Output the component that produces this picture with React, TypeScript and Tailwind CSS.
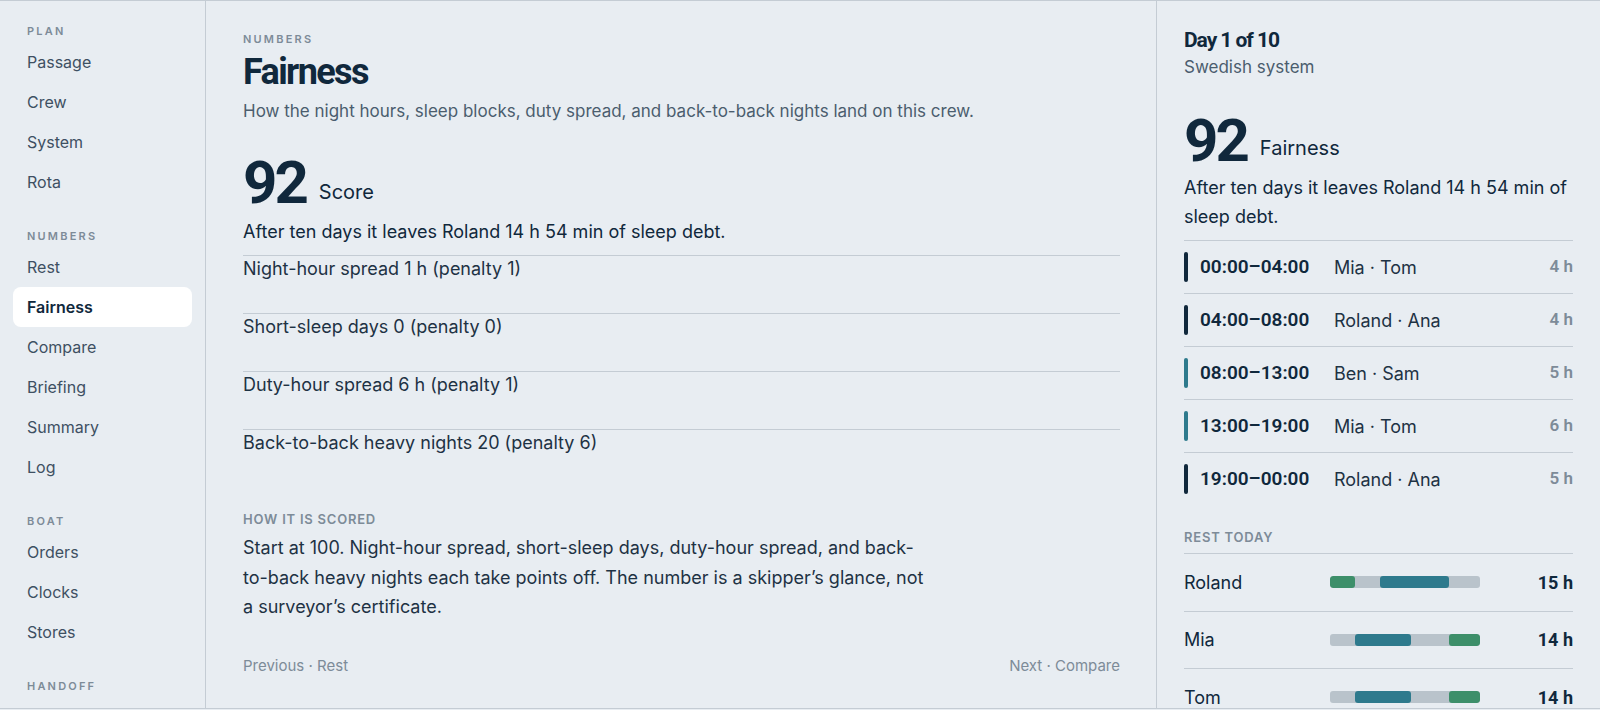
import React from 'react';

const display = "font-['Roboto',sans-serif]";
const numeric = "font-['Roboto',sans-serif]";

const nav = [
  { label: 'PLAN', items: ['Passage', 'Crew', 'System', 'Rota'] },
  { label: 'NUMBERS', items: ['Rest', 'Fairness', 'Compare', 'Briefing', 'Summary', 'Log'] },
  { label: 'BOAT', items: ['Orders', 'Clocks', 'Stores'] },
  { label: 'HANDOFF', items: [] as string[] },
];

const penalties = [
  'Night-hour spread 1 h (penalty 1)',
  'Short-sleep days 0 (penalty 0)',
  'Duty-hour spread 6 h (penalty 1)',
  'Back-to-back heavy nights 20 (penalty 6)',
];

const shifts = [
  { time: '00:00–04:00', crew: 'Mia · Tom', hours: '4 h', night: true },
  { time: '04:00–08:00', crew: 'Roland · Ana', hours: '4 h', night: true },
  { time: '08:00–13:00', crew: 'Ben · Sam', hours: '5 h', night: false },
  { time: '13:00–19:00', crew: 'Mia · Tom', hours: '6 h', night: false },
  { time: '19:00–00:00', crew: 'Roland · Ana', hours: '5 h', night: true },
];

// segments in hours of the day: [start, end, kind]
type Seg = [number, number, 'sleep' | 'watch'];
const rest: { name: string; total: string; segs: Seg[] }[] = [
  { name: 'Roland', total: '15 h', segs: [[0, 4, 'sleep'], [8, 19, 'watch']] },
  { name: 'Mia', total: '14 h', segs: [[4, 13, 'watch'], [19, 24, 'sleep']] },
  { name: 'Tom', total: '14 h', segs: [[4, 13, 'watch'], [19, 24, 'sleep']] },
];

function Sidebar() {
  return (
    <aside className="w-[206px] shrink-0 border-r border-[#c4ccd4] px-[13px] pt-[22px] overflow-hidden">
      {nav.map((section, i) => (
        <div key={section.label} className={i === 0 ? '' : 'mt-[26px]'}>
          <div className="pl-[14px] h-4 leading-4 text-[11px] font-semibold tracking-[0.2em] text-[#7d8b98] mb-[3px]">
            {section.label}
          </div>
          {section.items.map((item) => (
            <div
              key={item}
              className={`h-10 flex items-center pl-[14px] rounded-lg text-[16px] ${
                item === 'Fairness'
                  ? 'bg-white font-semibold text-[#10283c]'
                  : 'text-[#3e5062]'
              }`}
            >
              {item}
            </div>
          ))}
        </div>
      ))}
    </aside>
  );
}

function RestBar({ segs }: { segs: Seg[] }) {
  return (
    <div className="relative w-[150px] h-3 rounded-[3px] bg-[#b9c3cb] overflow-hidden">
      {segs.map(([a, b, kind]) => (
        <span
          key={a}
          className={`absolute top-0 h-full rounded-[3px] ${kind === 'sleep' ? 'bg-[#3d8f6a]' : 'bg-[#2e7a8d]'}`}
          style={{ left: `${(a / 24) * 100}%`, width: `${((b - a) / 24) * 100}%` }}
        />
      ))}
    </div>
  );
}

export default function App() {
  return (
    <div className="h-[710px] bg-[#e8edf2] font-['Inter',sans-serif] text-[#1e3244]">
      <div className="h-[709px] flex border-y border-[#c4ccd4] overflow-hidden">
        <Sidebar />

        {/* Main column */}
        <main className="flex-1 min-w-0 pl-[37px] pr-9 pt-[30px] overflow-hidden">
          <div className="h-4 leading-4 text-[11px] font-semibold tracking-[0.2em] text-[#7d8b98]">NUMBERS</div>
          <h1 className={`${display} mt-[5px] text-[36px] leading-[40px] font-bold tracking-[-0.045em] text-[#10283c]`}>
            Fairness
          </h1>
          <p className="mt-[6px] text-[17px] leading-[26px] text-[#4b5d6e]">
            How the night hours, sleep blocks, duty spread, and back-to-back nights land on this crew.
          </p>

          <div className="mt-[29px] flex items-end gap-[13px]">
            <span className={`${display} text-[60px] leading-none font-bold tracking-[-0.05em] text-[#10283c]`}>92</span>
            <span className="mb-[7px] text-[20px] leading-7 text-[#10283c]">Score</span>
          </div>
          <p className="mt-[6px] text-[18px] leading-[26px] text-[#10283c]">
            After ten days it leaves Roland 14 h 54 min of sleep debt.
          </p>

          <div className="mt-[10px]">
            {penalties.map((p) => (
              <div key={p} className="border-t border-[#c4ccd4] pb-[31px]">
                <div className="text-[18px] leading-[26px] text-[#1e3244]">{p}</div>
              </div>
            ))}
          </div>

          <div className="mt-[23px] text-[13px] leading-[18px] font-semibold tracking-[0.06em] text-[#7d8b98]">
            HOW IT IS SCORED
          </div>
          <p className="mt-[5px] max-w-[684px] text-[18px] leading-[1.65] text-[#1e3244]">
            Start at 100. Night-hour spread, short-sleep days, duty-hour spread, and back-to-back heavy nights each take
            points off. The number is a skipper’s glance, not a surveyor’s certificate.
          </p>

          <div className="mt-[33px] flex justify-between text-[15px] leading-[22px] text-[#7d8b98]">
            <span>Previous · Rest</span>
            <span>Next · Compare</span>
          </div>
        </main>

        {/* Right panel */}
        <section className="w-[444px] shrink-0 border-l border-[#c4ccd4] px-[27px] pt-[25px] overflow-hidden">
          <div className={`${display} text-[21px] leading-7 font-bold tracking-[-0.05em] text-[#10283c]`}>Day 1 of 10</div>
          <div className="mt-[1px] text-[17px] leading-6 text-[#4b5d6e]">Swedish system</div>

          <div className="mt-[32px] flex items-end gap-[13px]">
            <span className={`${display} text-[60px] leading-none font-bold tracking-[-0.05em] text-[#10283c]`}>92</span>
            <span className="mb-[9px] text-[20px] leading-7 text-[#10283c]">Fairness</span>
          </div>
          <p className="mt-[3px] text-[18px] leading-[28.5px] text-[#10283c]">
            After ten days it leaves Roland 14 h 54 min of sleep debt.
          </p>

          <div className="mt-[9px]">
            {shifts.map((s) => (
              <div key={s.time} className="h-[53px] border-t border-[#c4ccd4] flex items-center">
                <span className={`w-1 h-[30px] rounded-full ${s.night ? 'bg-[#10283c]' : 'bg-[#2e7a8d]'}`} />
                <span className={`${numeric} ml-[12px] w-[134px] text-[19px] font-semibold text-[#10283c]`}>{s.time}</span>
                <span className="flex-1 text-[18px] text-[#1e3244]">{s.crew}</span>
                <span className={`${numeric} text-[17px] font-semibold text-[#7d8b98]`}>{s.hours}</span>
              </div>
            ))}
          </div>

          <div className="mt-[23px] text-[13px] leading-[18px] font-semibold tracking-[0.06em] text-[#7d8b98]">
            REST TODAY
          </div>
          <div className="mt-[7px]">
            {rest.map((r) => (
              <div key={r.name} className="h-[57.5px] border-t border-[#c4ccd4] flex items-center">
                <span className="w-[146px] text-[18px] text-[#10283c]">{r.name}</span>
                <RestBar segs={r.segs} />
                <span className={`${numeric} ml-auto text-[18px] font-bold text-[#10283c]`}>{r.total}</span>
              </div>
            ))}
          </div>
        </section>
      </div>
    </div>
  );
}
